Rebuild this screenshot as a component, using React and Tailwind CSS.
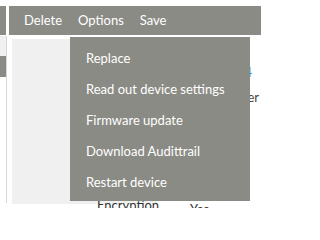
import React from "react";

const menuItems = [
  "Replace",
  "Read out device settings",
  "Firmware update",
  "Download Audittrail",
  "Restart device",
];

const App = () => {
  return (
    <div
      className="relative w-[261px] h-[208px] overflow-hidden bg-white text-[13px]"
      style={{ fontFamily: "Lato, 'Noto Sans', sans-serif" }}
    >
      <div className="h-[6px]" />
      <div className="flex">
        {/* Left strip */}
        <div className="w-[6px] shrink-0 flex flex-col">
          <div className="h-[29px] bg-[#8b8b85]" />
          <div className="h-px" />
          <div className="h-[20px] bg-[#f0f0f0]" />
          <div className="h-[21px] bg-[#8b8b85]" />
        </div>
        <div className="w-px shrink-0 mt-[30px] h-[167px] bg-[#d6d6d6]" />

        <div className="flex-1 min-w-0 ml-[2px] flex flex-col">
          {/* Toolbar */}
          <div className="h-[29px] bg-[#8b8b85] flex items-center pl-[15px] gap-[16px] text-white">
            <span>Delete</span>
            <span>Options</span>
            <span>Save</span>
          </div>

          {/* Content behind menu */}
          <div className="flex mt-[4px] h-[170px]">
            <div className="ml-[3px] w-[145px] shrink-0 h-[165px] bg-[#f0f0f0] flex flex-col justify-end">
              <div className="pl-[85px] leading-none translate-y-[8px] text-[#333]">Encryption</div>
            </div>
            <div className="flex-1 relative">
              <div className="pr-[9px] pt-[27px] leading-none text-right text-[#2f86d6]">1.4</div>
              <div className="pr-[2px] pt-[12px] leading-none text-right text-[#444]">Number</div>
              <div className="absolute left-[33px] bottom-[-7px] leading-none text-[#333]">Yes</div>
            </div>
          </div>
        </div>
      </div>

      {/* Options dropdown */}
      <div className="absolute left-[70px] top-[37px] w-[180px] bg-[#8b8b85] pt-[6px] pb-[3px] text-white">
        {menuItems.map((item) => (
          <div key={item} className="h-[31px] flex items-center pl-[16px]">
            {item}
          </div>
        ))}
      </div>
    </div>
  );
};

export default App;
